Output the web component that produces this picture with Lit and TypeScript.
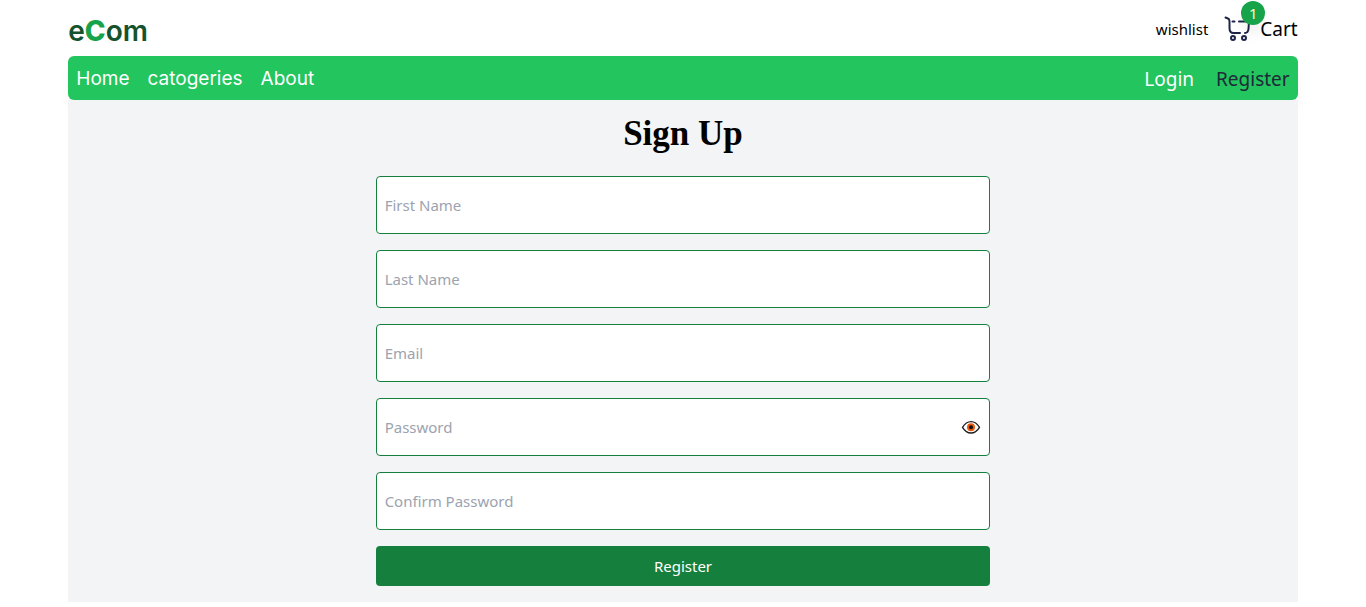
import { LitElement, html, css } from "lit";
import { customElement, state } from "lit/decorators.js";

interface Field {
  id: string;
  label: string;
  type: string;
}

const FIELDS: Field[] = [
  { id: "first-name", label: "First Name", type: "text" },
  { id: "last-name", label: "Last Name", type: "text" },
  { id: "email", label: "Email", type: "email" },
  { id: "password", label: "Password", type: "password" },
  { id: "confirm-password", label: "Confirm Password", type: "password" },
];

@customElement("shop-header")
export class ShopHeader extends LitElement {
  static styles = css`
    :host {
      display: block;
    }
    a {
      color: inherit;
      text-decoration: none;
    }
    .top {
      display: flex;
      justify-content: space-between;
      align-items: flex-end;
      height: 56px;
      box-sizing: border-box;
      padding-bottom: 7px;
    }
    .logo {
      font: 600 28px/36px Inter, sans-serif;
      color: #14532d;
    }
    .logo span {
      color: #16a34a;
      font-weight: 800;
    }
    .tools {
      display: flex;
      align-items: center;
      padding-bottom: 6px;
      color: #000;
    }
    .wishlist {
      font-size: 15px;
      line-height: 28px;
      margin-right: 16px;
    }
    .cart {
      display: flex;
      align-items: center;
      gap: 8px;
      font-size: 19px;
      line-height: 28px;
    }
    .cart-icon {
      position: relative;
      display: flex;
    }
    .badge {
      position: absolute;
      top: -14px;
      left: 17px;
      width: 24px;
      height: 24px;
      border-radius: 50%;
      background: #16a34a;
      color: #fef9c3;
      font-size: 15px;
      line-height: 24px;
      text-align: center;
      box-shadow: 0 10px 15px -3px rgb(0 0 0 / 0.1);
    }
    nav {
      display: flex;
      justify-content: space-between;
      align-items: center;
      padding: 9px 8px 7px;
      border-radius: 6px;
      background: #22c55e;
      color: #fff;
      font-size: 19px;
      line-height: 28px;
      box-shadow: 0 10px 15px -3px rgb(0 0 0 / 0.06);
    }
    .pages {
      display: flex;
      gap: 18px;
      font-family: Inter, sans-serif;
    }
    .account {
      display: flex;
      gap: 22px;
    }
    .current {
      color: #1f2937;
    }
  `;

  render() {
    return html`
      <div class="top">
        <a class="logo" href="#">e<span>C</span>om</a>
        <div class="tools">
          <a class="wishlist" href="#wishlist">wishlist</a>
          <a class="cart" href="#cart">
            <span class="cart-icon">
              <svg width="28" height="28" viewBox="0 0 28 28" fill="none" stroke="#1e2548" stroke-width="2" stroke-linecap="round" aria-hidden="true">
                <path d="M1.500 2.500L4 3.500Q5.500 4 5.500 6.500V13Q5.500 18 9.500 18H16" />
                <path d="M8.500 6.500H10.500M15 6.500H25L24.500 14Q24 18 21 18" />
                <circle cx="9" cy="23" r="2" />
                <circle cx="20" cy="23" r="2" />
              </svg>
              <span class="badge">1</span>
            </span>
            Cart
          </a>
        </div>
      </div>
      <nav>
        <div class="pages">
          <a href="#home">Home</a>
          <a href="#categories">catogeries</a>
          <a href="#about">About</a>
        </div>
        <div class="account">
          <a href="#login">Login</a>
          <a class="current" href="#register">Register</a>
        </div>
      </nav>
    `;
  }
}

@customElement("sign-up-form")
export class SignUpForm extends LitElement {
  static styles = css`
    :host {
      display: block;
      background: #f3f4f6;
      padding: 16px 0;
    }
    h1 {
      margin: 0 0 24px;
      font: 700 35px/36px "Liberation Serif", serif;
      text-align: center;
      color: #000;
    }
    form {
      display: flex;
      flex-direction: column;
      gap: 16px;
      width: 50%;
      margin: 0 auto;
    }
    .field {
      display: flex;
      align-items: center;
      height: 56px;
      border: 1px solid #15803d;
      border-radius: 4px;
      background: #fff;
      padding: 0 8px;
    }
    input {
      flex: 1;
      min-width: 0;
      height: 100%;
      padding: 0;
      border: 0;
      outline: 0;
      background: none;
      font: inherit;
      color: #111827;
    }
    input::placeholder {
      color: #9ca3af;
      opacity: 1;
    }
    .eye {
      display: flex;
      padding: 0;
      border: 0;
      background: none;
      cursor: pointer;
    }
    .submit {
      height: 40px;
      border: 0;
      border-radius: 4px;
      background: #15803d;
      color: #fff;
      font: inherit;
      cursor: pointer;
    }
  `;

  @state() private revealed = false;

  private toggle() {
    this.revealed = !this.revealed;
  }

  private renderEye() {
    return html`
      <button class="eye" type="button" aria-label="Show password" @click=${this.toggle}>
        <svg width="20" height="16" viewBox="0 0 20 16" aria-hidden="true">
          <path d="M1.500 8.300Q5 2.600 10 2.600T18.500 8.300Q15 14 10 14T1.500 8.300Z" fill="#fff" stroke="#1c1c1c" stroke-width="1.300" />
          <circle cx="10" cy="8.300" r="4" fill="#e8590c" />
          <circle cx="10" cy="8.300" r="2" fill="#111" />
        </svg>
      </button>
    `;
  }

  render() {
    return html`
      <h1>Sign Up</h1>
      <form @submit=${(e: Event) => e.preventDefault()}>
        ${FIELDS.map(
          (f) => html`
            <div class="field">
              <input
                id=${f.id}
                type=${f.id === "password" && this.revealed ? "text" : f.type}
                placeholder=${f.label}
                aria-label=${f.label}
              />
              ${f.id === "password" ? this.renderEye() : null}
            </div>
          `
        )}
        <button class="submit" type="submit">Register</button>
      </form>
    `;
  }
}

@customElement("app-root")
export class AppRoot extends LitElement {
  static styles = css`
    :host {
      display: block;
      width: 90%;
      margin: 0 auto;
      font: 15px/24px "Segoe UI", "Noto Sans", sans-serif;
    }
  `;

  render() {
    return html`
      <shop-header></shop-header>
      <sign-up-form></sign-up-form>
    `;
  }
}
